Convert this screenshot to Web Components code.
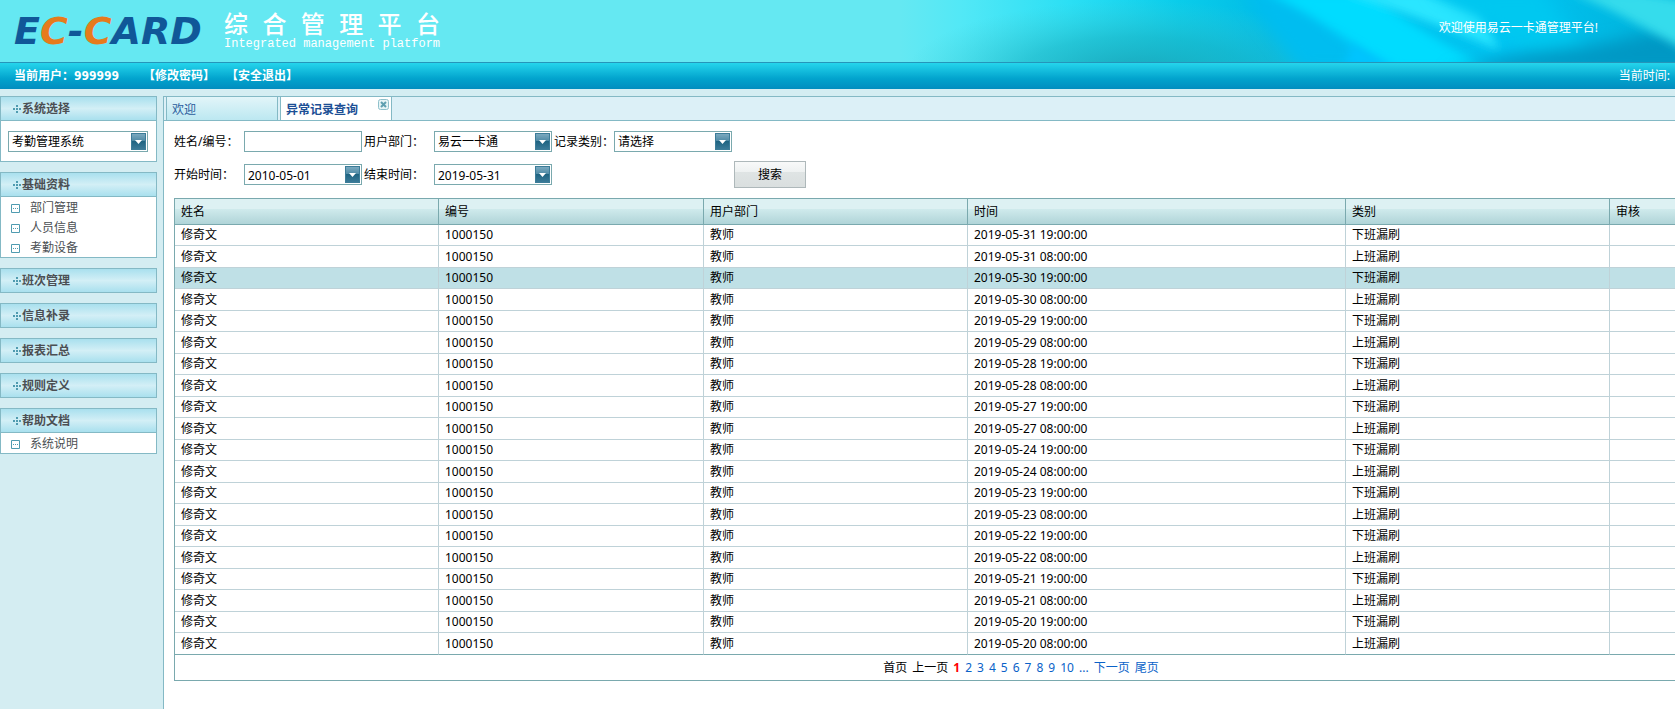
<!DOCTYPE html>
<html lang="zh-CN">
<head>
<meta charset="utf-8">
<title>综合管理平台</title>
<style>
  html, body { margin: 0; height: 100%; }
  body {
    overflow: hidden;
    font: 12px/20px "Noto Sans", "Noto Sans CJK SC", sans-serif;
    color: #000;
    background: #d4edf2;
    --line: #84b9c5;
    --field: #7aa9ae;
  }
</style>
</head>
<body>
<card-app></card-app>

<script>
class BaseElement extends HTMLElement {
  constructor() {
    super();
    this.attachShadow({ mode: "open" });
  }
  connectedCallback() {
    this.shadowRoot.innerHTML = this.render();
  }
}

customElements.define("card-app", class extends BaseElement {
  render() {
    return `
    <style>
      :host { display: flex; flex-direction: column; height: 100%; min-height: 100vh; }
      .body { display: flex; flex: 1; gap: 6px; padding-top: 7px; min-width: 0; }
      aside { flex: none; width: 157px; display: flex; flex-direction: column; gap: 10px; }
      .picker { padding: 10px 8px 9px 7px; }
      main { flex: 1; min-width: 0; overflow: hidden; background: #fff; border-left: 1px solid var(--line); }
      .content { padding: 4px 0 0 10px; }
    </style>
    <app-banner></app-banner>
    <user-bar></user-bar>
    <div class="body">
      <aside>
        <side-panel heading="系统选择"><div class="picker"><combo-box label="系统选择" value="考勤管理系统"></combo-box></div></side-panel>
        <side-panel heading="基础资料">
          <menu-item>部门管理</menu-item>
          <menu-item>人员信息</menu-item>
          <menu-item>考勤设备</menu-item>
        </side-panel>
        <side-panel heading="班次管理" collapsed></side-panel>
        <side-panel heading="信息补录" collapsed></side-panel>
        <side-panel heading="报表汇总" collapsed></side-panel>
        <side-panel heading="规则定义" collapsed></side-panel>
        <side-panel heading="帮助文档">
          <menu-item>系统说明</menu-item>
        </side-panel>
      </aside>
      <main>
        <tab-strip></tab-strip>
        <div class="content">
          <search-form></search-form>
          <record-table></record-table>
        </div>
      </main>
    </div>`;
  }
});

customElements.define("app-banner", class extends BaseElement {
  render() {
    return `
    <style>
      :host { display: block; flex: none; background: #65e8f2; border-bottom: 1px solid #2595ba; }
      header { display: grid; grid-template-columns: 1fr; height: 62px; color: #fff; }
      .art { grid-area: 1 / 1; justify-self: end; width: 775px; height: 62px; }
      .row { grid-area: 1 / 1; position: relative; display: flex; align-items: center; padding: 0 77px 0 14px; }
      .logo { width: 210px; font: italic 700 38px/62px "DejaVu Sans", sans-serif; color: #105798; white-space: nowrap; }
      .logo b { color: #e67b1c; }
      .title { width: 216px; padding-bottom: 2px; }
      h1 { margin: 0; font: 500 24px/28px "Noto Sans CJK SC", sans-serif; text-align: justify; text-align-last: justify; }
      .title p { margin: 0; font: 12px/14px "Liberation Mono", monospace; white-space: nowrap; }
      .welcome { margin: 0 0 6px auto; }
    </style>
    <header>
      <svg class="art" viewBox="0 0 775 62" preserveAspectRatio="none" aria-hidden="true">
        <defs>
          <linearGradient id="base">
            <stop offset="0" stop-color="#65e8f2"/>
            <stop offset=".08" stop-color="#52e8f6"/>
            <stop offset=".22" stop-color="#2bdff4"/>
            <stop offset=".36" stop-color="#0accea"/>
            <stop offset=".48" stop-color="#00bce6"/>
            <stop offset=".8" stop-color="#00c4f2"/>
            <stop offset="1" stop-color="#00b0d8"/>
          </linearGradient>
          <radialGradient id="shade">
            <stop offset="0" stop-color="#18a2b6" stop-opacity=".9"/>
            <stop offset=".5" stop-color="#20b0bf" stop-opacity=".55"/>
            <stop offset="1" stop-color="#40c8d0" stop-opacity="0"/>
          </radialGradient>
          <filter id="soft" x="-20%" y="-60%" width="140%" height="220%"><feGaussianBlur stdDeviation="8"/></filter>
          <filter id="fine" x="-20%" y="-60%" width="140%" height="220%"><feGaussianBlur stdDeviation="5"/></filter>
        </defs>
        <rect width="775" height="62" fill="url(#base)"/>
        <ellipse cx="235" cy="74" rx="230" ry="74" fill="url(#shade)"/>
        <path d="M340 -10H400L540 70H400Z" fill="#00bdf0" filter="url(#soft)"/>
        <path d="M362 -8C410 10 460 50 490 70H590C550 46 500 20 470 -8Z" fill="#00dcff" filter="url(#fine)"/>
        <path d="M440 66C460 50 450 40 425 30L500 70Z" fill="#00c4ff" filter="url(#fine)"/>
        <path d="M440 -8C500 12 545 26 600 50L580 12L520 -8Z" fill="#2ce6ff" filter="url(#fine)"/>
        <path d="M530 -8C570 10 630 50 650 70H700L640 -8Z" fill="#00c8f0" filter="url(#soft)"/>
        <path d="M545 72L610 56L700 44L790 24V72Z" fill="#0098c4" filter="url(#soft)"/>
        <path d="M670 -8C710 8 745 28 785 50V0L740 -8Z" fill="#35dcec" filter="url(#fine)"/>
      </svg>
      <div class="row">
        <div class="logo" aria-label="EC-CARD">E<b>C</b>-<b>C</b>ARD</div>
        <div class="title">
          <h1>综合管理平台</h1>
          <p>Integrated management platform</p>
        </div>
        <p class="welcome">欢迎使用易云一卡通管理平台!</p>
      </div>
    </header>`;
  }
});

customElements.define("user-bar", class extends BaseElement {
  render() {
    return `
    <style>
      :host { display: flex; flex: none; align-items: center; height: 26px; padding: 0 5px 0 14px; color: #fff; white-space: nowrap;
        background: linear-gradient(#25d5ec, #02a3cd 60%, #028dbf); }
      .user { font-weight: 700; width: 129px; }
      .user span { font-family: "DejaVu Sans Condensed", "DejaVu Sans", sans-serif; font-stretch: condensed; }
      nav { display: flex; gap: 11px; }
      a { color: inherit; font-weight: 700; text-decoration: none; }
      .clock { margin-left: auto; }
    </style>
    <div class="user">当前用户：<span>999999</span></div>
    <nav><a href="#password">【修改密码】</a><a href="#logout">【安全退出】</a></nav>
    <div class="clock">当前时间:</div>`;
  }
});

customElements.define("side-panel", class extends BaseElement {
  render() {
    const open = !this.hasAttribute("collapsed");
    return `
    <style>
      :host { display: block; border: 1px solid var(--line); border-top: 0; background: #fff; }
      :host([collapsed]) { border-bottom: 0; }
      h2 { margin: 0; font: inherit; }
      button { display: flex; align-items: center; width: 100%; height: 25px; padding: 1px 0 0 12px; margin: 0; border: 0;
        border-top: 1px solid var(--line); border-bottom: 1px solid var(--line);
        background: linear-gradient(#a9e0ee, #d3eff6 50%, #a9e0ee); font: inherit; font-weight: 700; color: #4b4f53; }
    </style>
    <h2><button type="button" aria-expanded="${open}">
      <svg width="9" height="9" fill="#4f9bb0" aria-hidden="true"><path d="M3 0h2v2H3zM3 3h2v2H3zM3 6h2v2H3zM0 3h2v2H0zM6 3h2v2H6z"/></svg>${this.getAttribute("heading")}
    </button></h2>
    <slot></slot>`;
  }
});

customElements.define("menu-item", class extends BaseElement {
  render() {
    return `
    <style>
      :host { display: block; }
      a { display: flex; align-items: center; gap: 10px; box-sizing: border-box; height: 20px; padding: 2px 0 0 10px; color: #4b4f53; text-decoration: none; }
    </style>
    <a href="#item"><svg width="9" height="9" aria-hidden="true"><path d="M.5.5h8v8h-8z" fill="#fff" stroke="#4f9bb0"/><path d="M2 4h1v1H2zM4 4h1v1H4zM6 4h1v1H6z" fill="#4f9bb0"/></svg><slot></slot></a>`;
  }
});

/* Field with a drop-down trigger; kind="date" gives a typed date box. */
customElements.define("combo-box", class extends BaseElement {
  render() {
    const value = this.getAttribute("value"), label = this.getAttribute("label");
    const field = this.getAttribute("kind") === "date"
      ? `<input type="text" aria-label="${label}" value="${value}">`
      : `<select aria-label="${label}"><option>${value}</option></select>`;
    return `
    <style>
      :host { display: grid; grid-template-columns: 1fr 17px; box-sizing: border-box; height: 21px; border: 1px solid var(--field); background: #fff; }
      select, input { grid-area: 1 / 1 / 2 / 3; appearance: none; box-sizing: border-box; width: 100%; height: 19px; margin: 0; padding: 1px 17px 0 3px; border: 0; background: none; font: inherit; line-height: 18px; color: #000; outline: 0; }
      .arrow { grid-area: 1 / 2; margin: 1px; pointer-events: none; display: grid; place-items: center; box-sizing: border-box; border: 1px solid #3c7c98;
        background: linear-gradient(#7aa9bf, #4d88a3 49%, #1f6482 50%, #3a7997); }
    </style>
    ${field}
    <span class="arrow"><svg width="7" height="4" aria-hidden="true"><path d="M0 0h7L3.500 4z" fill="#fff"/></svg></span>`;
  }
});

customElements.define("tab-strip", class extends BaseElement {
  render() {
    return `
    <style>
      :host { display: flex; gap: 2px; box-sizing: border-box; height: 25px; padding-left: 2px; background: #dcf0f7;
        border-top: 1px solid var(--line); box-shadow: inset 0 -1px var(--line); }
      .tab { display: flex; box-sizing: border-box; width: 112px; height: 23px; border: 1px solid var(--line); border-width: 0 1px;
        background: linear-gradient(#e2f5f9, #bce8f1); }
      .tab.on { background: #fff; }
      a { flex: 1; padding-left: 5px; line-height: 25px; color: #2c5c9c; text-decoration: none; }
      .on a { font-weight: 700; color: #1d4f95; }
      button { width: 11px; height: 11px; margin: 2px 2px 0 0; padding: 0; border: 0; background: none; }
      svg { display: block; }
    </style>
    <div class="tab"><a href="#welcome">欢迎</a></div>
    <div class="tab on"><a href="#records">异常记录查询</a>
      <button type="button" aria-label="关闭"><svg width="11" height="11"><rect x=".5" y=".5" width="10" height="10" rx="2" fill="#e6f4f6" stroke="#8fc0cb"/><path d="M3 3l5 5M8 3l-5 5" stroke="#5f9fb0" stroke-width="2"/></svg></button>
    </div>`;
  }
});

customElements.define("search-form", class extends BaseElement {
  render() {
    return `
    <style>
      :host { display: block; }
      form { display: grid; grid-template-columns: 68px 118px 68px 118px 58px 118px auto; grid-auto-rows: 33px; column-gap: 2px; align-items: center; justify-content: start; margin: 0; }
      label { white-space: nowrap; }
      .start { grid-column: 1; }
      .name { box-sizing: border-box; width: 100%; height: 21px; padding: 0 3px; border: 1px solid var(--field); font: inherit; background: #fff; }
      button { grid-column: 7; width: 72px; height: 27px; padding: 0; border: 1px solid #aeb8ba; font: inherit; color: #000;
        background: linear-gradient(#f8f9f9, #eef1f1 40%, #dfe4e4 41%, #dadfdf); }
    </style>
    <form onsubmit="return false">
      <label for="name">姓名/编号：</label><input id="name" class="name" type="text">
      <label for="dept">用户部门：</label><combo-box id="dept" label="用户部门" value="易云一卡通"></combo-box>
      <label for="kind">记录类别：</label><combo-box id="kind" label="记录类别" value="请选择"></combo-box>
      <label class="start" for="from">开始时间：</label><combo-box id="from" kind="date" label="开始时间" value="2010-05-01"></combo-box>
      <label for="to">结束时间：</label><combo-box id="to" kind="date" label="结束时间" value="2019-05-31"></combo-box>
      <button type="submit">搜索</button>
    </form>`;
  }
});

customElements.define("record-table", class extends BaseElement {
  render() {
    const days = ["31", "30", "29", "28", "27", "24", "23", "22", "21", "20"];
    const shifts = [["19:00:00", "下班漏刷"], ["08:00:00", "上班漏刷"]];
    const rows = days.flatMap(d => shifts.map(([time, kind]) =>
      `<tr><td>修奇文</td><td>1000150</td><td>教师</td><td>2019-05-${d} ${time}</td><td>${kind}</td><td></td></tr>`)).join("");
    const pages = [2, 3, 4, 5, 6, 7, 8, 9, 10].map(n => `<a href="#p${n}">${n}</a>`).join("");
    return `
    <style>
      :host { display: block; margin-top: 7px; box-sizing: border-box; min-width: 1694px; border: 1px solid var(--field); }
      table { width: 100%; table-layout: fixed; border-collapse: separate; border-spacing: 0; }
      col { width: 264px; }
      col.code { width: 265px; }
      col.time { width: 378px; }
      col:last-child { width: auto; }
      th, td { box-sizing: border-box; padding: 0 0 0 6px; text-align: left; font-weight: 400; line-height: 18px; white-space: nowrap; }
      th { height: 26px; padding-top: 1px; border-right: 1px solid var(--field); border-bottom: 1px solid var(--field);
        background: linear-gradient(#ddf1f3 0 40%, #cfeaec 41%, #b0d4d8); }
      td { height: 21px; border-right: 1px solid #bfd2d8; border-bottom: 1px solid #bfd2d8; }
      tr:nth-child(even) td { height: 22px; }
      tbody tr:nth-child(3) td { background: #bfe0e6; }
      tbody tr:last-child td { border-bottom-color: var(--field); }
      th:last-child, td:last-child { border-right: 0; }
      nav { display: flex; justify-content: center; gap: 5px; line-height: 25px; }
      a { color: #0a62c8; text-decoration: none; }
      strong { color: #f00; }
    </style>
    <table>
      <colgroup><col><col class="code"><col><col class="time"><col><col></colgroup>
      <thead><tr><th>姓名</th><th>编号</th><th>用户部门</th><th>时间</th><th>类别</th><th>审核</th></tr></thead>
      <tbody>${rows}</tbody>
    </table>
    <nav><span>首页</span><span>上一页</span><strong>1</strong>${pages}<a href="#more">...</a><a href="#next">下一页</a><a href="#last">尾页</a></nav>`;
  }
});
</script>
</body>
</html>
